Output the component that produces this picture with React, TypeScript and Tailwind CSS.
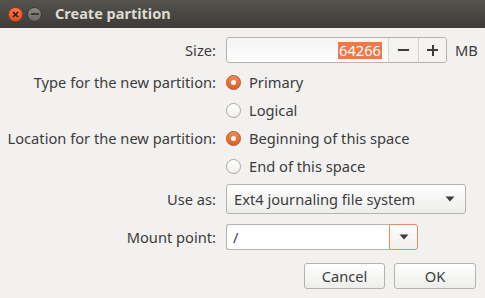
import React from "react";

function Radio({ checked, label }: { checked?: boolean; label: string }) {
  return (
    <div className="flex h-[28px] items-center gap-[8px]">
      {checked ? (
        <span className="flex h-[15px] w-[15px] items-center justify-center rounded-full border border-[#b9521f] bg-gradient-to-b from-[#f08a55] to-[#dc5e28]">
          <span className="h-[5px] w-[5px] rounded-full bg-white" />
        </span>
      ) : (
        <span className="h-[15px] w-[15px] rounded-full border border-[#a9a7a2] bg-gradient-to-b from-white to-[#f1f0ee]" />
      )}
      <span>{label}</span>
    </div>
  );
}

function Row({ label, children, className }: { label: string; children: React.ReactNode; className?: string }) {
  return (
    <div className={"flex items-center " + (className ?? "")}>
      <div className="w-[216px] shrink-0 text-right">{label}</div>
      <div className="ml-[10px] flex grow items-center">{children}</div>
    </div>
  );
}

function Caret() {
  return (
    <svg width="10" height="6" viewBox="0 0 10 6">
      <path d="M0.5 0.5 H9.5 L5 5.5 Z" fill="#3c3c3c" />
    </svg>
  );
}

export default function App() {
  return (
    <div
      className="h-[298px] w-[485px] overflow-hidden bg-[#f2f1f0] text-[14.67px] text-[#3c3c3c]"
      style={{ fontFamily: '"Noto Sans", "DejaVu Sans", sans-serif' }}
    >
      {/* titlebar */}
      <div className="flex h-[28px] items-center bg-gradient-to-b from-[#54534e] to-[#3c3b37] pl-[8px]">
        <span className="flex h-[15px] w-[15px] items-center justify-center rounded-full border border-[#9e3a1a] bg-gradient-to-b from-[#f47950] to-[#e04f22]">
          <svg width="7" height="7" viewBox="0 0 7 7">
            <path d="M1 1 L6 6 M6 1 L1 6" stroke="#3b1a0e" strokeWidth="1.6" />
          </svg>
        </span>
        <span className="ml-[4px] flex h-[15px] w-[15px] items-center justify-center rounded-full border border-[#3a3935] bg-gradient-to-b from-[#8a8984] to-[#6a6965]">
          <span className="h-[2px] w-[8px] bg-[#3c3b37]" />
        </span>
        <span className="ml-[13px] text-[14.5px] font-bold text-[#dfdbd2]">Create partition</span>
      </div>

      <div className="flex flex-col pt-[9px]">
        <Row label="Size:">
          <div className="flex h-[26px] w-[221px] items-stretch rounded-[3px] border border-[#b6b3ac] bg-gradient-to-b from-[#f4f4f3] to-white">
            <div className="flex grow items-center justify-end pr-[6px]">
              <span className="bg-[#f07746] px-[1px] leading-[17px] text-white">64266</span>
            </div>
            <div className="flex w-[30px] items-center justify-center border-l border-[#d6d4cf] bg-[#f4f3f2]">
              <span className="h-[2px] w-[11px] bg-[#3c3c3c]" />
            </div>
            <div className="relative flex w-[28px] items-center justify-center rounded-r-[3px] border-l border-[#d6d4cf] bg-[#f4f3f2]">
              <span className="h-[2px] w-[11px] bg-[#3c3c3c]" />
              <span className="absolute h-[11px] w-[2px] bg-[#3c3c3c]" />
            </div>
          </div>
          <span className="ml-[8px]">MB</span>
        </Row>

        <div className="mt-[5px]">
          <Row label="Type for the new partition:">
            <Radio checked label="Primary" />
          </Row>
          <Row label="">
            <Radio label="Logical" />
          </Row>
          <Row label="Location for the new partition:">
            <Radio checked label="Beginning of this space" />
          </Row>
          <Row label="">
            <Radio label="End of this space" />
          </Row>
        </div>

        <Row label="Use as:" className="mt-[4px]">
          <div className="flex h-[30px] w-[240px] items-center justify-between rounded-[3px] border border-[#b6b3ac] bg-gradient-to-b from-white to-[#ededeb] pl-[7px] pr-[10px]">
            <span>Ext4 journaling file system</span>
            <Caret />
          </div>
        </Row>

        <Row label="Mount point:" className="mt-[10px]">
          <div className="flex h-[26px] w-[192px] items-stretch">
            <div className="flex grow items-center rounded-l-[3px] border border-r-0 border-[#b6b3ac] bg-white pl-[6px]">
              /
            </div>
            <div className="flex w-[29px] items-center justify-center rounded-r-[3px] border border-[#e58a61] bg-gradient-to-b from-white to-[#efeeec]">
              <Caret />
            </div>
          </div>
        </Row>

        <div className="mt-[13px] flex justify-end gap-[9px] pr-[9px]">
          <button className="h-[26px] w-[81px] rounded-[3px] border border-[#b6b3ac] bg-gradient-to-b from-white to-[#ededeb]">
            Cancel
          </button>
          <button className="h-[26px] w-[82px] rounded-[3px] border border-[#b6b3ac] bg-gradient-to-b from-white to-[#ededeb]">
            OK
          </button>
        </div>
      </div>
    </div>
  );
}
